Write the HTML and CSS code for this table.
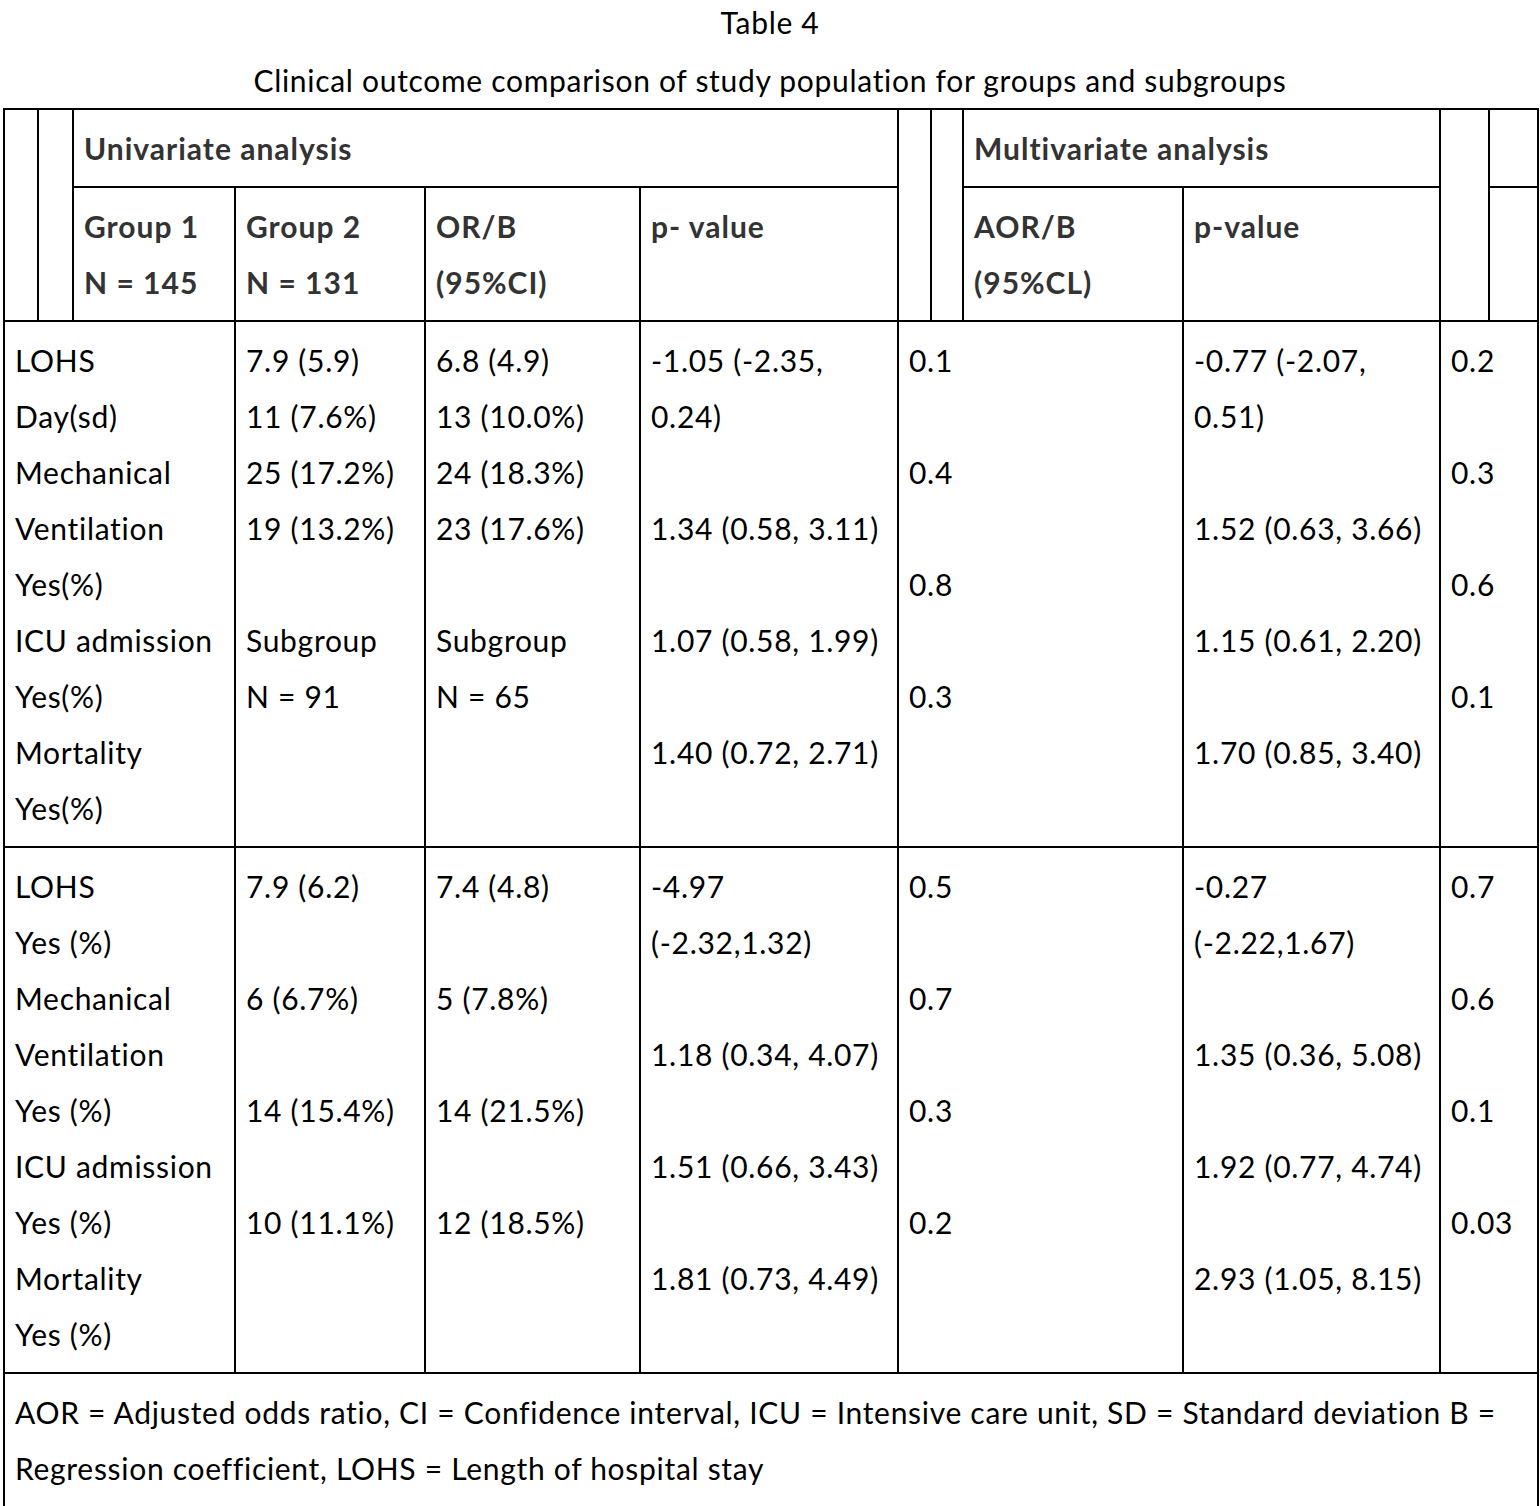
FILE: index.html
```html
<!DOCTYPE html>
<html lang="en">
<head>
<meta charset="utf-8">
<title>Table 4</title>
<link rel="stylesheet" href="styles.css">
</head>
<body>
<div class="title">Table 4</div>
<div class="caption">Clinical outcome comparison of study population for groups and subgroups</div>
<div class="tbl">
  <div class="cell head c1 r12"></div>
  <div class="cell head c2 r12"></div>
  <div class="cell head uni r1">Univariate analysis</div>
  <div class="cell head c7 r12"></div>
  <div class="cell head c8 r12"></div>
  <div class="cell head multi r1">Multivariate analysis</div>
  <div class="cell head c11 r12"></div>
  <div class="cell head c12 r1"></div>

  <div class="cell head c3 r2">Group 1<br>N = 145</div>
  <div class="cell head c4 r2">Group 2<br>N = 131</div>
  <div class="cell head c5 r2">OR/B<br>(95%CI)</div>
  <div class="cell head c6 r2">p- value</div>
  <div class="cell head c9 r2">AOR/B<br>(95%CL)</div>
  <div class="cell head c10 r2">p-value</div>
  <div class="cell head c12 r2"></div>

  <div class="cell lab r3">LOHS<br>Day(sd)<br>Mechanical<br>Ventilation<br>Yes(%)<br>ICU admission<br>Yes(%)<br>Mortality<br>Yes(%)</div>
  <div class="cell c4 r3">7.9 (5.9)<br>11 (7.6%)<br>25 (17.2%)<br>19 (13.2%)<br><br>Subgroup<br>N = 91</div>
  <div class="cell c5 r3">6.8 (4.9)<br>13 (10.0%)<br>24 (18.3%)<br>23 (17.6%)<br><br>Subgroup<br>N = 65</div>
  <div class="cell c6 r3">-1.05 (-2.35,<br>0.24)<br><br>1.34 (0.58, 3.11)<br><br>1.07 (0.58, 1.99)<br><br>1.40 (0.72, 2.71)</div>
  <div class="cell pv r3">0.1<br><br>0.4<br><br>0.8<br><br>0.3</div>
  <div class="cell c10 r3">-0.77 (-2.07,<br>0.51)<br><br>1.52 (0.63, 3.66)<br><br>1.15 (0.61, 2.20)<br><br>1.70 (0.85, 3.40)</div>
  <div class="cell pv2 r3">0.2<br><br>0.3<br><br>0.6<br><br>0.1</div>

  <div class="cell lab r4">LOHS<br>Yes (%)<br>Mechanical<br>Ventilation<br>Yes (%)<br>ICU admission<br>Yes (%)<br>Mortality<br>Yes (%)</div>
  <div class="cell c4 r4">7.9 (6.2)<br><br>6 (6.7%)<br><br>14 (15.4%)<br><br>10 (11.1%)</div>
  <div class="cell c5 r4">7.4 (4.8)<br><br>5 (7.8%)<br><br>14 (21.5%)<br><br>12 (18.5%)</div>
  <div class="cell c6 r4">-4.97<br>(-2.32,1.32)<br><br>1.18 (0.34, 4.07)<br><br>1.51 (0.66, 3.43)<br><br>1.81 (0.73, 4.49)</div>
  <div class="cell pv r4">0.5<br><br>0.7<br><br>0.3<br><br>0.2</div>
  <div class="cell c10 r4">-0.27<br>(-2.22,1.67)<br><br>1.35 (0.36, 5.08)<br><br>1.92 (0.77, 4.74)<br><br>2.93 (1.05, 8.15)</div>
  <div class="cell pv2 r4">0.7<br><br>0.6<br><br>0.1<br><br>0.03</div>

  <div class="cell foot r5">AOR = Adjusted odds ratio, CI = Confidence interval, ICU = Intensive care unit, SD = Standard deviation B =<br>Regression coefficient, LOHS = Length of hospital stay</div>
</div>
</body>
</html>
```

FILE: styles.css
```css
html, body {
  margin: 0;
  padding: 0;
  background: #fff;
}
body {
  font-family: Lato, "Noto Sans", sans-serif;
  font-size: 30px;
  letter-spacing: 0.7px;
  color: #000;
  width: 1540px;
}
.title {
  text-align: center;
  line-height: 44px;
}
.caption {
  text-align: center;
  line-height: 56px;
  padding-top: 8px;
}
.tbl {
  display: grid;
  grid-template-columns: 34px 35px 162px 190px 215px 258px 33px 32px 220px 257px 49px 49px;
  width: 1536px;
  margin-left: 3px;
  border-left: 2px solid #000;
  border-top: 2px solid #000;
  box-sizing: border-box;
}
.cell {
  box-sizing: border-box;
  border-right: 2px solid #000;
  border-bottom: 2px solid #000;
  padding: 10px;
  line-height: 56px;
  white-space: nowrap;
}
.head {
  font-weight: 700;
  color: #333;
  letter-spacing: 1px;
}
.c1 { grid-column: 1; }
.c2 { grid-column: 2; }
.c3 { grid-column: 3; }
.c4 { grid-column: 4; }
.c5 { grid-column: 5; }
.c6 { grid-column: 6; }
.c7 { grid-column: 7; }
.c8 { grid-column: 8; }
.c9 { grid-column: 9; }
.c10 { grid-column: 10; }
.c11 { grid-column: 11; }
.c12 { grid-column: 12; }
.uni { grid-column: 3 / span 4; }
.multi { grid-column: 9 / span 2; }
.lab { grid-column: 1 / span 3; }
.pv { grid-column: 7 / span 3; }
.pv2 { grid-column: 11 / span 2; }
.foot { grid-column: 1 / span 12; }
.r1 { grid-row: 1; }
.r2 { grid-row: 2; }
.r12 { grid-row: 1 / span 2; }
.r3 { grid-row: 3; }
.r4 { grid-row: 4; }
.r5 { grid-row: 5; }
```
